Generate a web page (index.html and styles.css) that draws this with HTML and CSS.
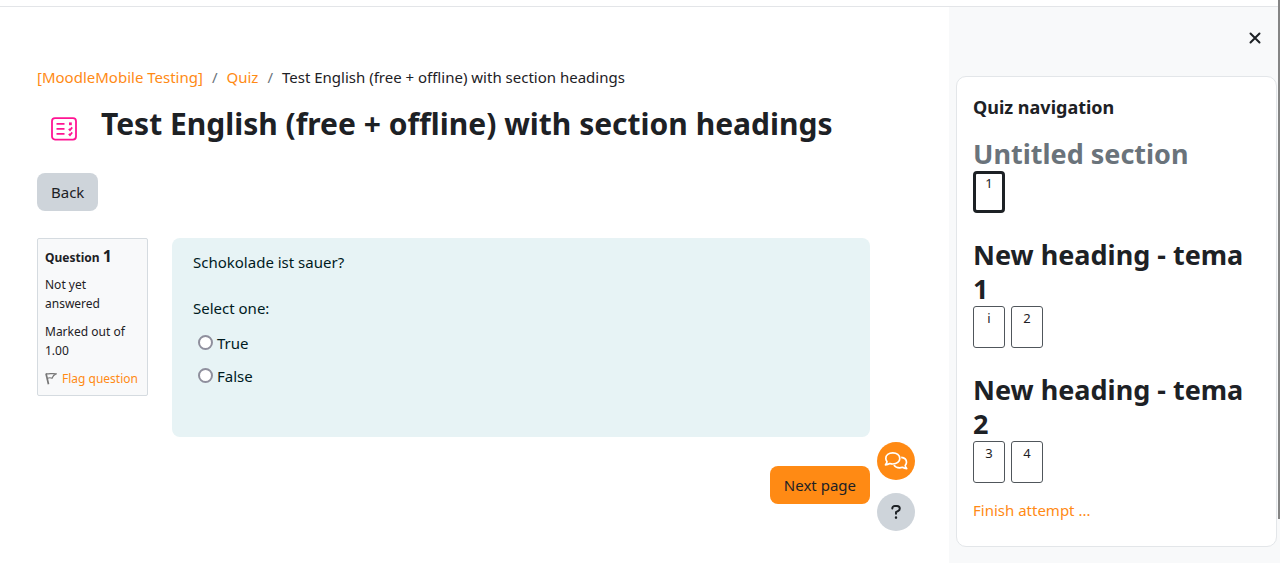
FILE: index.html
```
<!DOCTYPE html>
<html lang="en">

<head>
    <meta charset="UTF-8" />
    <meta name="viewport" content="width=device-width, initial-scale=1" />
    <title>Test English (free + offline) with section headings</title>
    <link rel="stylesheet" href="styles.css">
</head>

<body>
    <div class="navbar"></div>
    <div class="page">
        <main class="main">
            <nav class="breadcrumb" aria-label="Breadcrumb">
                <a href="#">[MoodleMobile Testing]</a>
                <span class="divider">/</span>
                <a href="#">Quiz</a>
                <span class="divider">/</span>
                <span>Test English (free + offline) with section headings</span>
            </nav>

            <header class="page-header">
                <svg class="quiz-icon" width="28" height="24" viewBox="0 0 28 24" fill="none" stroke="#ff1493" aria-hidden="true">
                    <rect x="2" y="1.200" width="24" height="21.400" rx="3" stroke-width="1.800" />
                    <path d="M6.500 6.800h8M6.500 11.800h8M6.500 16.800h8" stroke-width="1.800" />
                    <path d="M19 6.800h2.800" stroke-width="2.800" />
                    <path d="M18.800 11.800l1.200 1.300 2.200-2.700M18.800 16.800l1.200 1.300 2.200-2.700" stroke-width="1.700" />
                </svg>
                <h1>Test English (free + offline) with section headings</h1>
            </header>

            <button type="button" class="btn btn-secondary">Back</button>

            <form class="quiz-form">
                <div class="question">
                    <div class="info">
                        <h3>Question <span class="qno">1</span></h3>
                        <div>Not yet answered</div>
                        <div>Marked out of 1.00</div>
                        <a href="#" class="flag">
                            <svg width="12" height="13" viewBox="0 0 12 13" fill="none" stroke="#777" aria-hidden="true">
                                <path d="M1 1.500l2.500 10.800" stroke-width="1.700" />
                                <path d="M1.200 1.600c3 .9 5.500-.8 9.800.3-2.300.9-3.100 2-4 4.300-1.600-.7-3-.6-4.500.1" stroke-width="1.200" />
                            </svg>
                            <span>Flag question</span>
                        </a>
                    </div>
                    <fieldset class="formulation">
                        <p>Schokolade ist sauer?</p>
                        <p class="prompt">Select one:</p>
                        <div class="answer">
                            <input type="radio" name="answer" id="answertrue">
                            <label for="answertrue">True</label>
                        </div>
                        <div class="answer">
                            <input type="radio" name="answer" id="answerfalse">
                            <label for="answerfalse">False</label>
                        </div>
                    </fieldset>
                </div>
                <div class="submitbtns">
                    <button type="button" class="btn btn-primary">Next page</button>
                </div>
            </form>

            <div class="floating">
                <button type="button" class="round chat" aria-label="Contact">
                    <svg width="24" height="20" viewBox="0 0 24 20" fill="none" stroke="#fff" stroke-width="1.700" stroke-linejoin="round" aria-hidden="true">
                        <path d="M8.800 1.900c4 0 7 2.300 7 5.500s-3 5.600-7 5.600c-1.100 0-2.100-.2-3-.5-1.200.8-2.600 1.300-4.300 1.300.9-1 1.400-2 1.500-3.100C2.300 9.700 1.800 8.600 1.800 7.400c0-3.200 3-5.500 7-5.500z" />
                        <path d="M17.200 6.400c3.100.3 5.300 2.300 5.300 4.900 0 1.200-.5 2.300-1.300 3.200.1 1.100.6 2.100 1.500 3.100-1.700 0-3.100-.5-4.300-1.300-.9.3-1.800.5-2.800.5-2.500 0-4.600-1-5.700-2.700" />
                    </svg>
                </button>
                <button type="button" class="round help" aria-label="Help">
                    <svg width="12" height="16" viewBox="0 0 14 18" fill="none" stroke="#1d2125" stroke-width="2.300" stroke-linecap="round" stroke-linejoin="round" aria-hidden="true">
                        <path d="M2.700 5V4.700C2.700 3.100 4 2 5.600 2h2.600c1.800 0 3.200 1.300 3.200 3 0 1.200-.7 2.200-1.700 2.700L7 9.200v1.900" />
                        <path d="M7 15.500v.1" stroke-width="2.800" />
                    </svg>
                </button>
            </div>
        </main>

        <aside class="drawer">
            <div class="drawer-header">
                <button type="button" class="close" aria-label="Close">
                    <svg width="12" height="12" viewBox="0 0 12 12" stroke="#1d2125" stroke-width="2" stroke-linecap="round" aria-hidden="true">
                        <path d="M1.500 1.500l9 9M10.500 1.500l-9 9" />
                    </svg>
                </button>
            </div>
            <section class="block">
                <h2>Quiz navigation</h2>
                <h3 class="dimmed">Untitled section</h3>
                <div class="qn-buttons">
                    <a href="#" class="qnbutton thispage">1</a>
                </div>
                <h3>New heading - tema 1</h3>
                <div class="qn-buttons">
                    <a href="#" class="qnbutton">i</a>
                    <a href="#" class="qnbutton">2</a>
                </div>
                <h3>New heading - tema 2</h3>
                <div class="qn-buttons">
                    <a href="#" class="qnbutton">3</a>
                    <a href="#" class="qnbutton">4</a>
                </div>
                <a href="#" class="finish">Finish attempt ...</a>
            </section>
            <div class="scroll-thumb"></div>
        </aside>
    </div>
</body>

</html>
```

FILE: styles.css
```
* {
    box-sizing: border-box;
}

body {
    margin: 0;
    min-height: 100vh;
    display: flex;
    flex-direction: column;
    font-family: 'Segoe UI', 'Noto Sans', sans-serif;
    font-size: 15px;
    line-height: 24px;
    color: #1d2125;
    background: #fff;
}

h1,
h2,
h3,
p {
    margin: 0;
}

a {
    color: #ff8a14;
    text-decoration: none;
}

a:hover {
    text-decoration: underline;
}

button {
    font: inherit;
    color: inherit;
    border: none;
    cursor: pointer;
}

.navbar {
    height: 7px;
    border-bottom: 1px solid #e3e5e8;
}

.page {
    flex: 1;
    display: flex;
}

.main {
    position: relative;
    flex: 1;
    min-width: 0;
    padding: 58px 79px 0 37px;
}

.breadcrumb {
    display: flex;
    flex-wrap: wrap;
    gap: 9px;
}

.divider {
    color: #6a737b;
}

.page-header {
    display: flex;
    align-items: center;
    gap: 23px;
    margin: 15px 0 29px;
    padding-left: 13px;
}

.page-header h1 {
    font-size: 30px;
    line-height: 40px;
}

.quiz-icon {
    flex: none;
    margin-top: 10px;
}

.btn {
    height: 38px;
    padding: 0 14px;
    border-radius: 8px;
}

.btn-secondary {
    background: #ced4da;
}

.btn-primary {
    background: #ff8a14;
}

.question {
    display: flex;
    align-items: flex-start;
    gap: 24px;
    margin-top: 27px;
}

.info {
    flex: none;
    width: 111px;
    padding: 9px 7px 7px;
    border: 1px solid #d5dbe0;
    border-radius: 2px;
    background: #f8f9fa;
    font-size: 12px;
    line-height: 19px;
    display: flex;
    flex-direction: column;
    gap: 9px;
}

.info h3 {
    font-size: 12px;
    line-height: 16px;
}

.qno {
    font-size: 16px;
}

.flag {
    display: flex;
    align-items: center;
    gap: 5px;
    white-space: nowrap;
}

.formulation {
    flex: 1;
    min-width: 0;
    min-height: 199px;
    margin: 0;
    padding: 12px 21px;
    border: none;
    border-radius: 8px;
    background: #e7f3f5;
    color: #001a1e;
}

.prompt {
    margin: 22px 0 6px;
}

.answer {
    display: flex;
    align-items: center;
    gap: 4px;
    height: 33px;
    padding-left: 5px;
}

.answer input {
    appearance: none;
    width: 15px;
    height: 15px;
    margin: 0;
    border: 2px solid #8f8f9d;
    border-radius: 50%;
    background: #fff;
}

.answer input:checked {
    border-width: 5px;
    border-color: #ff8a14;
}

.submitbtns {
    display: flex;
    justify-content: flex-end;
    margin-top: 29px;
}

.floating {
    position: absolute;
    right: 34px;
    bottom: 32px;
    display: flex;
    flex-direction: column;
    gap: 13px;
}

.round {
    display: flex;
    align-items: center;
    justify-content: center;
    width: 38px;
    height: 38px;
    padding: 0;
    border-radius: 50%;
}

.chat {
    background: #ff8a14;
}

.help {
    background: #ced4da;
}

.drawer {
    position: relative;
    flex: none;
    width: 331px;
    padding: 0 3px 16px 7px;
    background: #f8f9fa;
}

.drawer-header {
    display: flex;
    justify-content: flex-end;
    height: 69px;
    padding: 16px 6px;
}

.close {
    display: flex;
    align-items: center;
    justify-content: center;
    width: 32px;
    height: 30px;
    padding: 0;
    background: none;
}

.block {
    padding: 18px 16px 24px;
    border: 1px solid #e3e6e9;
    border-radius: 10px;
    background: #fff;
}

.block h2 {
    margin-bottom: 18px;
    font-size: 18px;
    line-height: 24px;
}

.block h3 {
    font-size: 27px;
    line-height: 34px;
}

.block .dimmed {
    color: #6a737b;
}

.qn-buttons {
    display: flex;
    gap: 6px;
    margin-bottom: 25px;
}

.qnbutton {
    width: 32px;
    height: 42px;
    border: 1px solid #50565b;
    border-radius: 3px;
    color: #1d2125;
    font-size: 13px;
    line-height: 22px;
    text-align: center;
}

.thispage {
    border: 3px solid #1d2125;
    border-radius: 4px;
    line-height: 18px;
}

.finish {
    display: block;
    margin-top: -10px;
}

.scroll-thumb {
    position: absolute;
    top: -7px;
    right: 0;
    width: 2px;
    height: 519px;
    background: #858585;
}
```
